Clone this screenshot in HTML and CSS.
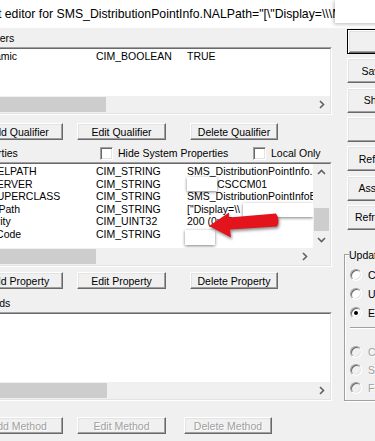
FILE: index.html
```html
<!DOCTYPE html>
<html>
<head>
<meta charset="utf-8">
<title>Object editor</title>
<link rel="stylesheet" href="styles.css">
</head>
<body>
<div class="titlebar">
  <span class="title-text">Object editor for SMS_DistributionPointInfo.NALPath=&quot;[\&quot;Display=\\\MSCSCCM01\&quot;]MSWNET:[\&quot;SMS_SITE=CS1\&quot;]\\MSCSCCM01\&quot;</span>
  <div class="title-overlay"></div>
</div>
<div class="main">
  <div class="left">
    <div class="label label-q">Qualifiers</div>
    <div class="listbox lb-qual">
      <div class="lb-inner">
        <div class="lb-content">
          <div class="row"><span>dynamic</span><span>CIM_BOOLEAN</span><span>TRUE</span></div>
        </div>
        <div class="hscroll">
          <div class="sb-btn"></div>
          <div class="hthumb thumb-q"></div>
          <div class="track"></div>
          <div class="sb-btn"><svg width="17" height="17" viewBox="0 0 17 17"><path d="M7 5 L10.5 8.5 L7 12" fill="none" stroke="#606060" stroke-width="1.6"/></svg></div>
        </div>
      </div>
    </div>
    <div class="btn-row btn-row-q">
      <div class="btn">Add Qualifier</div>
      <div class="btn">Edit Qualifier</div>
      <div class="btn btn-del">Delete Qualifier</div>
    </div>
    <div class="props-head">
      <div class="label label-p">Properties</div>
      <div class="check check-hide"><span class="cbox"></span>Hide System Properties</div>
      <div class="check"><span class="cbox"></span>Local Only</div>
    </div>
    <div class="listbox lb-props">
      <div class="lb-inner">
        <div class="lb-content">
          <div class="row"><span>__RELPATH</span><span>CIM_STRING</span><span>SMS_DistributionPointInfo.NALPath=&quot;[\&quot;Display=\\\MSCSCCM01</span></div>
          <div class="row"><span>__SERVER</span><span>CIM_STRING</span><span><span class="redact redact-srv"></span>CSCCM01</span></div>
          <div class="row"><span>__SUPERCLASS</span><span>CIM_STRING</span><span>SMS_DistributionPointInfoBase</span></div>
          <div class="row"><span>NALPath</span><span>CIM_STRING</span><span>[&quot;Display=\\<span class="redact redact-nal"></span></span></div>
          <div class="row"><span>Priority</span><span>CIM_UINT32</span><span>200 (0xc8)</span></div>
          <div class="row"><span>SiteCode</span><span>CIM_STRING</span><span><span class="redact redact-site"></span></span></div>
        </div>
        <div class="vscroll">
          <div class="sb-btn"><svg width="17" height="17" viewBox="0 0 17 17"><path d="M5 10 L8.5 6.5 L12 10" fill="none" stroke="#606060" stroke-width="1.6"/></svg></div>
          <div class="vtrack"><div class="vthumb"></div></div>
          <div class="sb-btn"><svg width="17" height="17" viewBox="0 0 17 17"><path d="M5 7 L8.5 10.5 L12 7" fill="none" stroke="#606060" stroke-width="1.6"/></svg></div>
        </div>
        <div class="hscroll">
          <div class="sb-btn"></div>
          <div class="hthumb thumb-p"></div>
          <div class="track"></div>
          <div class="sb-btn"><svg width="17" height="17" viewBox="0 0 17 17"><path d="M7 5 L10.5 8.5 L7 12" fill="none" stroke="#606060" stroke-width="1.6"/></svg></div>
        </div>
        <div class="corner"></div>
      </div>
    </div>
    <div class="btn-row btn-row-p">
      <div class="btn">Add Property</div>
      <div class="btn">Edit Property</div>
      <div class="btn btn-del">Delete Property</div>
    </div>
    <div class="label label-m">Methods</div>
    <div class="listbox lb-meth">
      <div class="lb-inner">
        <div class="lb-content"></div>
        <div class="hscroll">
          <div class="sb-btn"></div>
          <div class="hthumb thumb-m"></div>
          <div class="track"></div>
          <div class="sb-btn"><svg width="17" height="17" viewBox="0 0 17 17"><path d="M7 5 L10.5 8.5 L7 12" fill="none" stroke="#606060" stroke-width="1.6"/></svg></div>
        </div>
      </div>
    </div>
    <div class="btn-row btn-row-m">
      <div class="btn disabled">Add Method</div>
      <div class="btn disabled">Edit Method</div>
      <div class="btn btn-del disabled">Delete Method</div>
    </div>
  </div>
  <div class="right">
    <div class="rbtns">
      <div class="rbtn rbtn-default">Close</div>
      <div class="rbtn">Save Object</div>
      <div class="rbtn">Show MOF</div>
      <div class="rbtn">Class</div>
      <div class="rbtn">References...</div>
      <div class="rbtn">Associators...</div>
      <div class="rbtn">Refresh Object</div>
    </div>
    <div class="groupbox">
      <span class="group-title">Update type</span>
      <div class="radio-row"><span class="radio"></span>Create only</div>
      <div class="radio-row"><span class="radio"></span>Update only</div>
      <div class="radio-row"><span class="radio on"></span>Either</div>
      <div class="sep"></div>
      <div class="radio-row dis"><span class="radio"></span>Compatible</div>
      <div class="radio-row dis"><span class="radio"></span>Safe</div>
      <div class="radio-row dis"><span class="radio"></span>Force</div>
    </div>
  </div>
</div>
<svg class="red-arrow" width="82" height="36" viewBox="0 0 82 36"><path d="M5 18 L25 4.5 L25 9.5 L72 5.5 Q76.5 12 73 18.5 L26 21.5 L27 29.5 Z" fill="#e3141b"/></svg>
</body>
</html>
```

FILE: styles.css
```css
* { box-sizing: border-box; }
html, body { margin: 0; padding: 0; }
body {
  width: 375px;
  height: 441px;
  overflow: hidden;
  position: relative;
  background: #f0f0f0;
  font-family: "Liberation Sans", Arial, sans-serif;
  font-size: 10.5px;
  color: #000;
}

/* title bar */
.titlebar {
  height: 28px;
  background: #fff;
  position: relative;
  overflow: hidden;
  white-space: nowrap;
  font-size: 12.25px;
  line-height: 28px;
}
.title-text { display: block; margin-left: -34px; }
.title-overlay {
  position: absolute;
  left: 335px;
  top: 0;
  width: 60px;
  height: 23px;
  background: #fff;
  box-shadow: -1px 1px 4px rgba(0, 0, 0, 0.28);
}

/* layout */
.main { display: flex; margin-left: -30px; }
.left { width: 362px; flex: none; }
.right { flex: none; width: 110px; margin-left: 12px; }

.label { line-height: 13px; white-space: nowrap; }
.label-q { height: 19px; padding-top: 4px; }
.label-m { height: 23px; padding-top: 8px; }

/* list boxes */
.listbox {
  border: 1px solid;
  border-color: #a0a0a0 #fff #fff #a0a0a0;
  background: #fff;
}
.lb-qual { height: 68px; }
.lb-props { height: 105px; }
.lb-meth { height: 89px; }
.lb-inner {
  height: 100%;
  border: 1px solid;
  border-color: #696969 #e3e3e3 #e3e3e3 #696969;
  display: grid;
  grid-template-rows: 1fr 17px;
  grid-template-columns: 1fr;
}
.lb-props .lb-inner { grid-template-columns: 1fr 17px; }
.lb-content { overflow: hidden; padding-top: 1px; min-width: 0; min-height: 0; }
.lb-props .lb-content { grid-column: 1; grid-row: 1; }
.lb-props .hscroll { grid-column: 1; grid-row: 2; }
.vscroll { grid-column: 2; grid-row: 1; display: flex; flex-direction: column; background: #f0f0f0; }
.corner { grid-column: 2; grid-row: 2; background: #f0f0f0; }

.row {
  display: grid;
  grid-template-columns: 118px 91px max-content;
  height: 12.6px;
  line-height: 12.6px;
  padding-left: 6px;
  white-space: nowrap;
}
.redact {
  display: inline-block;
  vertical-align: top;
  background: #fff;
  box-shadow: 0 1px 3px rgba(0, 0, 0, 0.5);
}
.redact-srv { width: 30px; height: 14px; margin-top: -1px; }
.redact-nal { width: 70px; height: 14px; margin-left: 3px; }
.redact-site { width: 30px; height: 15px; margin-top: 2px; margin-left: -2px; }

/* scrollbars */
.hscroll { display: flex; background: #f0f0f0; min-width: 0; }
.sb-btn { width: 17px; height: 17px; flex: none; }
.sb-btn svg { display: block; }
.hthumb { height: 15px; margin: 1px 0; background: #cdcdcd; flex: none; }
.thumb-q { width: 117px; }
.thumb-p { width: 107px; }
.thumb-m { width: 118px; }
.track { flex: 1; }
.vtrack { flex: 1; display: flex; flex-direction: column; justify-content: flex-end; }
.vthumb { height: 23px; margin: 0 1px; background: #cdcdcd; }

/* buttons */
.btn-row { display: flex; height: 17px; }
.btn-row-q { margin-top: 8px; }
.btn-row-p { margin-top: 5px; }
.btn-row-m { margin-top: 16px; }
.btn, .rbtn {
  flex: none;
  display: flex;
  align-items: center;
  justify-content: center;
  white-space: nowrap;
  overflow: hidden;
  background: #f0f0f0;
  border: 1px solid;
  border-color: #fff #696969 #696969 #fff;
  box-shadow: inset -1px -1px 0 #a0a0a0, inset 1px 1px 0 #e3e3e3;
}
.btn { width: 89px; height: 17px; margin-left: 14px; }
.btn:first-child { margin-left: 4px; }
.btn-del { width: 88px; margin-left: 24px; }
.btn-row-m .btn-del { margin-left: 18px; }
.disabled { color: #a0a0a0; text-shadow: 1px 1px 0 #fff; }

/* properties header */
.props-head {
  display: flex;
  align-items: center;
  height: 13px;
  margin-top: 7px;
  margin-bottom: 2px;
  line-height: 13px;
  white-space: nowrap;
}
.label-p { width: 130px; flex: none; }
.check { display: flex; align-items: center; flex: none; }
.check-hide { width: 153px; }
.cbox {
  width: 13px;
  height: 13px;
  flex: none;
  margin-right: 5px;
  background: #fff;
  border: 1px solid;
  border-color: #a0a0a0 #fff #fff #a0a0a0;
  box-shadow: inset 1px 1px 0 #696969, inset -1px -1px 0 #e3e3e3;
}

/* right column */
.rbtns {
  display: flex;
  flex-direction: column;
  gap: 4.33px;
  padding-top: 1px;
  margin-left: 3px;
}
.rbtn { width: 86px; height: 25px; }
.rbtn-default {
  border-color: #000;
  box-shadow: inset 1px 1px 0 #fff, inset -1px -1px 0 #696969, inset 2px 2px 0 #e3e3e3, inset -2px -2px 0 #a0a0a0;
}

.groupbox {
  position: relative;
  margin-top: 24px;
  width: 110px;
  height: 147px;
  border: 1px solid #a0a0a0;
  box-shadow: 1px 1px 0 #fff, inset 1px 1px 0 #fff;
  padding: 10.5px 0 0 5px;
}
.group-title {
  position: absolute;
  left: 4px;
  top: -6px;
  line-height: 13px;
  padding: 0 1px 0 0;
  background: #f0f0f0;
  white-space: nowrap;
}
.radio-row {
  display: flex;
  align-items: center;
  height: 19px;
  white-space: nowrap;
}
.radio-row.dis { height: 18px; color: #a0a0a0; text-shadow: 1px 1px 0 #fff; }
.radio {
  position: relative;
  flex: none;
  width: 12px;
  height: 12px;
  margin-right: 6px;
  border-radius: 50%;
  background: #fff;
  border: 1px solid;
  border-color: #a0a0a0 #fff #fff #a0a0a0;
  box-shadow: inset 1px 1px 0 #696969, inset -1px -1px 0 #e3e3e3;
}
.radio-row.dis .radio { background: #f0f0f0; }
.radio.on::after {
  content: "";
  position: absolute;
  left: 3px;
  top: 3px;
  width: 4px;
  height: 4px;
  border-radius: 50%;
  background: #000;
}
.sep {
  margin: 4.5px 0 14px 0;
  border-top: 1px solid #a0a0a0;
  border-bottom: 1px solid #fff;
}

/* annotation arrow */
.red-arrow {
  position: absolute;
  left: 204px;
  top: 208px;
  filter: drop-shadow(1px 2px 1.5px rgba(0, 0, 0, 0.45));
}
```
